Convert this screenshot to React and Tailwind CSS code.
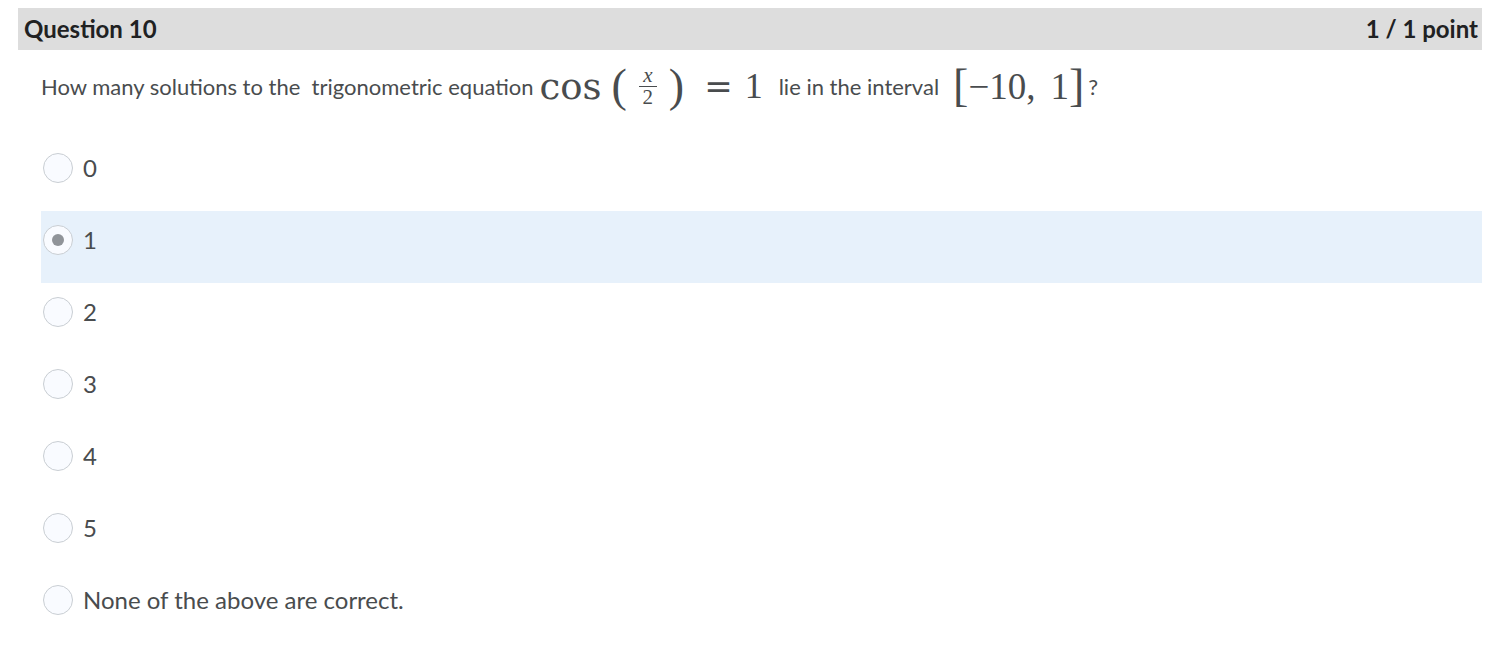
import { useState } from "react";

const options = ["0", "1", "2", "3", "4", "5", "None of the above are correct."];

function Radio({ checked }) {
  return (
    <span className="flex h-[30px] w-[30px] shrink-0 items-center justify-center rounded-full border border-[#c9ced3] bg-[#f9fbff]">
      {checked && <span className="h-[12px] w-[12px] rounded-full bg-[#909499]" />}
    </span>
  );
}

function MathCos() {
  return (
    <span className="ml-[6px] mr-[16px] inline-flex items-center font-['Liberation_Serif',serif] text-[#494c4e]">
      <span className="font-['DejaVu_Serif',serif] text-[37px] leading-none">cos</span>
      <span className="ml-[10px] text-[46px] font-light leading-none">(</span>
      <span className="mx-[12px] inline-flex flex-col items-center text-[21px] leading-[19px]">
        <span className="italic">x</span>
        <span className="my-[1px] h-[1px] w-[18px] bg-[#494c4e]" />
        <span>2</span>
      </span>
      <span className="text-[46px] font-light leading-none">)</span>
      <span className="ml-[20px] font-['DejaVu_Serif',serif] text-[34px] leading-none">=</span>
      <span className="ml-[12px] text-[36px] leading-none">1</span>
    </span>
  );
}

function MathInterval() {
  return (
    <span className="ml-[14px] mr-[4px] inline-flex items-center font-['Liberation_Serif',serif] text-[#494c4e]">
      <span className="text-[46px] font-light leading-none">[</span>
      <span className="text-[37px] leading-none">−10,</span>
      <span className="ml-[15px] text-[37px] leading-none">1</span>
      <span className="text-[46px] font-light leading-none">]</span>
    </span>
  );
}

export default function App() {
  const [selected, setSelected] = useState(1);

  return (
    <div className="min-h-screen bg-white pl-[18px] pr-[27px] pt-[8px] font-['Lato',sans-serif]">
      {/* Cabecera de la pregunta */}
      <div className="flex h-[42px] items-center justify-between bg-[#dddddd] pl-[6px] pr-[4px] text-[24px] font-bold text-[#202122]">
        <span>Question 10</span>
        <span>1 / 1 point</span>
      </div>

      <div className="pl-[23px]">
        {/* Enunciado */}
        <div className="flex h-[89px] items-start pt-[14px]">
          <p className="flex h-[44px] items-center text-[22px] text-[#494c4e]">
            <span className="whitespace-pre">How many solutions to the  trigonometric equation</span>
            <MathCos />
            <span>lie in the interval</span>
            <MathInterval />
            <span>?</span>
          </p>
        </div>

        {/* Opciones */}
        {options.map((opt, i) => (
          <label
            key={opt}
            onClick={() => setSelected(i)}
            className={`flex h-[72px] cursor-pointer items-start gap-[10px] pl-[2px] pt-[14px] ${
              selected === i ? "bg-[#e7f1fb]" : ""
            }`}
          >
            <Radio checked={selected === i} />
            <span className="text-[24px] leading-[30px] text-[#494c4e]">{opt}</span>
          </label>
        ))}
      </div>
    </div>
  );
}
